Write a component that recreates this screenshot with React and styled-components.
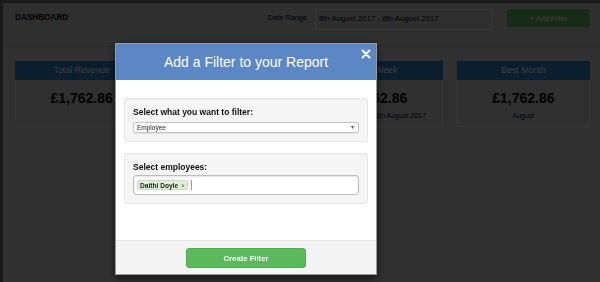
import React from 'react';
import styled, { createGlobalStyle } from 'styled-components';

const GlobalStyle = createGlobalStyle`
  html, body {
    margin: 0;
    padding: 0;
    background: #c8c8c8;
    font-family: "Liberation Sans", Arial, Helvetica, sans-serif;
  }
  * {
    box-sizing: border-box;
  }
`;

const Frame = styled.div`
  height: 282px;
  border-left: 3px solid #6e6e6e;
  border-top: 3px solid #6e6e6e;
  background: #c8c8c8;
  overflow: hidden;
`;

const Header = styled.header`
  height: 44px;
  display: flex;
  align-items: flex-start;
  padding: 6px 10px 0 12px;
  background: #c4c4c4;
  border-bottom: 1px solid #b4b4b4;
`;

const Title = styled.h1`
  margin: 0;
  font-size: 8.2px;
  line-height: 18px;
  font-weight: bold;
  color: #000;
`;

const HeaderRight = styled.div`
  margin-left: auto;
  display: flex;
  align-items: flex-start;
`;

const RangeLabel = styled.span`
  font-size: 7.3px;
  line-height: 18px;
  color: #000;
  margin-right: 8px;
`;

const RangeInput = styled.div`
  width: 177px;
  height: 21px;
  border: 1px solid #e0e0e0;
  background: #c6c6c6;
  padding: 3px 3px;
  font-size: 7.8px;
  line-height: 11px;
  color: #000;
  margin-right: 15px;
`;

const AddButton = styled.button`
  width: 83px;
  height: 18px;
  border: none;
  border-radius: 3px;
  background: #5cb85c;
  color: #fff;
  font-family: inherit;
  font-size: 7.4px;
  padding: 0;
`;

const Content = styled.main`
  padding: 14px 10px 0 12px;
`;

const Cards = styled.div`
  display: grid;
  grid-template-columns: repeat(4, 1fr);
  gap: 14px;
`;

const Card = styled.div`
  background: #c8c8c8;
`;

const CardHead = styled.div`
  height: 19px;
  background: #2a7cc0;
  color: #fff;
  font-size: 8.8px;
  line-height: 19px;
  text-align: center;
`;

const CardBody = styled.div`
  height: 47px;
  border: 1px solid #dedede;
  border-top: none;
  padding-top: 9px;
  text-align: center;
`;

const Value = styled.div`
  font-size: 14px;
  font-weight: bold;
  line-height: 18px;
  color: #000;
`;

const Sub = styled.div`
  margin-top: 3px;
  font-size: 7px;
  line-height: 11px;
  color: #000;
`;

const Backdrop = styled.div`
  position: fixed;
  inset: 0;
  background: rgba(0, 0, 0, 0.76);
`;

const Modal = styled.div`
  position: fixed;
  top: 43px;
  left: 115px;
  width: 262px;
  background: #fff;
  border: 1px solid rgba(0, 0, 0, 0.4);
  box-shadow: 0 3px 8px rgba(0, 0, 0, 0.6);
  overflow: hidden;
`;

const ModalHead = styled.div`
  position: relative;
  height: 36px;
  background: #5b87c5;
  color: #fff;
  font-size: 14px;
  line-height: 36px;
  text-align: center;
`;

const Close = styled.button`
  position: absolute;
  top: 5px;
  right: 5px;
  width: 10px;
  height: 10px;
  padding: 0;
  border: none;
  background: none;
  display: flex;
`;

const ModalBody = styled.div`
  padding: 18px 8px 36px;
`;

const Well = styled.div`
  background: #f5f5f5;
  border: 1px solid #e6e6e6;
  border-radius: 3px;
  padding: 8px;
  box-shadow: inset 0 1px 1px rgba(0, 0, 0, 0.03);

  & + & {
    margin-top: 11px;
  }
`;

const Label = styled.div`
  font-size: 8.5px;
  font-weight: bold;
  line-height: 11px;
  color: #111;
  margin-bottom: ${({ gap }) => gap}px;
`;

const Select = styled.div`
  height: 11px;
  display: flex;
  align-items: center;
  justify-content: space-between;
  background: #fff;
  border: 1px solid #c4c4c4;
  border-radius: 2px;
  padding: 0 4px 0 3px;
  font-size: 6.5px;
  line-height: 9px;
  color: #222;
  box-shadow: 0 1px 1px rgba(0, 0, 0, 0.08);
`;

const Caret = styled.span`
  font-size: 6px;
  color: #555;
`;

const TagInput = styled.div`
  height: 20px;
  display: flex;
  align-items: center;
  background: #fff;
  border: 1px solid #bdbdbd;
  border-radius: 3px;
  padding: 0 3px;
  box-shadow: inset 0 1px 2px rgba(0, 0, 0, 0.12);
`;

const Tag = styled.span`
  display: inline-flex;
  align-items: center;
  height: 10px;
  padding: 0 2px;
  background: #dff0d8;
  border: 1px solid #c3e0b5;
  border-radius: 2px;
  font-size: 6.6px;
  font-weight: bold;
  color: #222;
`;

const TagX = styled.span`
  margin-left: 3px;
  font-weight: normal;
  color: #666;
`;

const Cursor = styled.span`
  width: 1px;
  height: 10px;
  margin-left: 3px;
  background: #999;
`;

const Footer = styled.div`
  height: 34px;
  background: #f4f4f4;
  border-top: 1px solid #e4e4e4;
  display: flex;
  justify-content: center;
  padding-top: 7px;
`;

const CreateButton = styled.button`
  width: 120px;
  height: 20px;
  border: 1px solid #4cae4c;
  border-radius: 3px;
  background: #5cb85c;
  color: #fff;
  font-family: inherit;
  font-size: 7.7px;
  font-weight: bold;
  padding: 0;
`;

const stats = [
  { title: 'Total Revenue', value: '£1,762.86' },
  { title: 'Best Day', value: '£1,762.86', sub: 'Thursday 10th August 2017' },
  { title: 'Best Week', value: '£1,762.86', sub: 'Mon 7th - Thu 10th August 2017' },
  { title: 'Best Month', value: '£1,762.86', sub: 'August' },
];

export default function App() {
  return (
    <>
      <GlobalStyle />
      <Frame>
        <Header>
          <Title>DASHBOARD</Title>
          <HeaderRight>
            <RangeLabel>Date Range</RangeLabel>
            <RangeInput>8th August 2017 - 8th August 2017</RangeInput>
            <AddButton>+ Add Filter</AddButton>
          </HeaderRight>
        </Header>
        <Content>
          <Cards>
            {stats.map((s) => (
              <Card key={s.title}>
                <CardHead>{s.title}</CardHead>
                <CardBody>
                  <Value>{s.value}</Value>
                  {s.sub && <Sub>{s.sub}</Sub>}
                </CardBody>
              </Card>
            ))}
          </Cards>
        </Content>
      </Frame>

      <Backdrop />
      <Modal>
        <ModalHead>
          Add a Filter to your Report
          <Close aria-label="Close">
            <svg width="10" height="10" viewBox="0 0 10 10">
              <path d="M1.5 1.5 L8.5 8.5 M8.5 1.5 L1.5 8.5" stroke="#fff" strokeWidth="2" strokeLinecap="round" />
            </svg>
          </Close>
        </ModalHead>
        <ModalBody>
          <Well>
            <Label gap={4}>Select what you want to filter:</Label>
            <Select>
              <span>Employee</span>
              <Caret>▾</Caret>
            </Select>
          </Well>
          <Well>
            <Label gap={2}>Select employees:</Label>
            <TagInput>
              <Tag>
                Daithi Doyle<TagX>×</TagX>
              </Tag>
              <Cursor />
            </TagInput>
          </Well>
        </ModalBody>
        <Footer>
          <CreateButton>Create Filter</CreateButton>
        </Footer>
      </Modal>
    </>
  );
}
